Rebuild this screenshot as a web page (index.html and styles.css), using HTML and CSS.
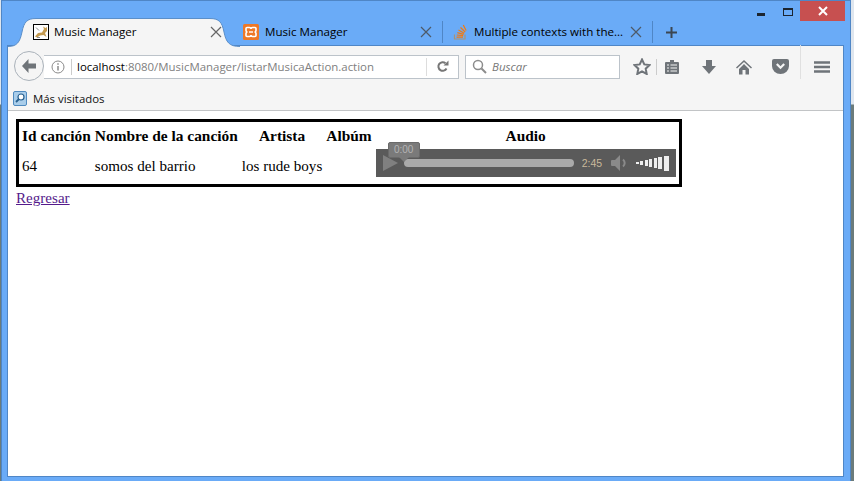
FILE: index.html
```html
<!DOCTYPE html>
<html lang="es">
<head>
<meta charset="utf-8">
<title>Music Manager</title>
<link rel="stylesheet" href="styles.css">
</head>
<body>
<div class="window">
  <div class="caption">
    <span class="cap-min"></span>
    <span class="cap-max"></span>
    <span class="cap-close"><svg width="12" height="10" viewBox="0 0 12 10"><path d="M2 1l8 8M10 1l-8 8" stroke="#fff" stroke-width="2"/></svg></span>
  </div>
  <div class="tabstrip">
    <div class="tab tab-active">
      <svg class="tab-shape" width="232" height="29" viewBox="0 0 232 29"><path d="M0 28.500C9 28.500 12 24 14 14C16 4 19 .5 28 .5H202C211 .5 214 4 216 14C218 24 221 28.500 232 28.500" fill="#f5f5f5" stroke="#5b8fc9"/></svg>
      <svg class="fav" width="16" height="16" viewBox="0 0 16 16"><rect x=".5" y=".5" width="15" height="15" fill="#fff" stroke="#000"/><path d="M2 12.500L5 9l4-.5L11 5l-1-2.500 2.500 1.500L14 3v4l-2 2 1.500 4-3-2-3.500.5-3 2z" fill="#c49a50"/><path d="M3 3.500l3 3M4 13.500h3" stroke="#8a8a8a"/></svg>
      <span class="tab-title">Music Manager</span>
      <svg class="tab-x" width="12" height="12" viewBox="0 0 12 12"><path d="M1 1l10 10M11 1L1 11" stroke="#666" stroke-width="1.200"/></svg>
    </div>
    <div class="tab tab-xampp">
      <svg class="fav" width="16" height="16" viewBox="0 0 16 16"><rect width="16" height="16" rx="1.500" fill="#ee7826"/><path d="M4 3.500h2.500Q8 3.500 8 5q0-1.500 1.500-1.500H12q1 0 1 1v2Q13 8 11.500 8 13 8 13 9.500v2q0 1-1 1H9.500Q8 12.500 8 11q0 1.500-1.500 1.500H4q-1 0-1-1v-2Q3 8 4.500 8 3 8 3 6.500v-2q0-1 1-1z" fill="none" stroke="#fff" stroke-width="1.600"/><path d="M6 8h4" stroke="#fff" stroke-width="1.400"/></svg>
      <span class="tab-title">Music Manager</span>
      <svg class="tab-x" width="12" height="12" viewBox="0 0 12 12"><path d="M1 1l10 10M11 1L1 11" stroke="#4d5a68" stroke-width="1.200"/></svg>
    </div>
    <div class="tab tab-so">
      <svg class="fav" width="16" height="16" viewBox="0 0 16 16"><path d="M1.500 10.500V15h10.500v-4.500" fill="none" stroke="#a89478" stroke-width="1.200"/><path d="M3.500 13.200H10M3.700 11l6.500.6M4.300 8.600l6.300 1.800M5.500 6l5.700 3.200M7.500 3.500L12.200 8M10.300 1l2.800 5.500" stroke="#f27a10" stroke-width="1.250" fill="none"/></svg>
      <span class="tab-title">Multiple contexts with the...</span>
      <svg class="tab-x" width="12" height="12" viewBox="0 0 12 12"><path d="M1 1l10 10M11 1L1 11" stroke="#4d5a68" stroke-width="1.200"/></svg>
    </div>
    <svg class="tab-new" width="13" height="13" viewBox="0 0 13 13"><path d="M6.500 1v11M1 6.500h11" stroke="#3b4652" stroke-width="2"/></svg>
  </div>
  <div class="frame">
    <div class="navbar">
      <div class="back"><svg width="18" height="16" viewBox="0 0 18 16"><path d="M8.500 1L2 8l6.500 7V10.500H16v-5H8.500z" fill="#6f7479"/></svg></div>
      <div class="urlbar">
        <svg class="info" width="14" height="14" viewBox="0 0 14 14"><circle cx="7" cy="7" r="6" fill="none" stroke="#8a8a8a"/><path d="M7 6v4.500M7 3.200v1.600" stroke="#8a8a8a" stroke-width="1.500"/></svg>
        <span class="url"><span class="url-host">localhost</span>:8080/MusicManager/listarMusicaAction.action</span>
        <span class="reload"><svg width="13" height="13" viewBox="0 0 13 13"><path d="M10.500 8.500A4.300 4.300 0 1 1 9.500 3.200" fill="none" stroke="#777" stroke-width="2"/><path d="M7.500 5.500h5v-5z" fill="#777"/></svg></span>
      </div>
      <div class="search">
        <svg width="15" height="15" viewBox="0 0 15 15"><circle cx="6" cy="6" r="4.500" fill="none" stroke="#8c8c8c" stroke-width="1.500"/><path d="M9.500 9.500l4.500 4.500" stroke="#8c8c8c" stroke-width="2"/></svg>
        <span class="search-text">Buscar</span>
      </div>
      <div class="tools">
        <svg class="t-star" width="18" height="17" viewBox="0 0 18 17"><path d="M9 1.500l2.300 4.900 5.200.7-3.800 3.600 1 5.300L9 13.400 4.300 16l1-5.300L1.500 7.100l5.200-.7z" fill="none" stroke="#6f7479" stroke-width="2"/></svg>
        <span class="t-sep"></span>
        <svg class="t-list" width="16" height="16" viewBox="0 0 16 16"><path d="M2 3h4V1h4v2h4a1 1 0 0 1 1 1v10a1 1 0 0 1-1 1H2a1 1 0 0 1-1-1V4a1 1 0 0 1 1-1z" fill="#6f7479"/><path d="M3 6h2M6.500 6H13M3 9h2M6.500 9H13M3 12h2M6.500 12H13" stroke="#f5f5f5"/></svg>
        <svg class="t-down" width="16" height="16" viewBox="0 0 16 16"><path d="M5 1h6v6h4l-7 8-7-8h4z" fill="#6f7479"/></svg>
        <svg class="t-home" width="16" height="16" viewBox="0 0 16 16"><path d="M8 1L0 8.500l1 1L8 3l7 6.500 1-1z" fill="#6f7479"/><path d="M3 10l5-5 5 5v5.500H9.500V11h-3v4.500H3z" fill="#6f7479"/></svg>
        <svg class="t-pocket" width="17" height="15" viewBox="0 0 17 15"><path d="M2 0h13a2 2 0 0 1 2 2v5a8.500 8 0 0 1-17 0V2a2 2 0 0 1 2-2z" fill="#6f7479"/><path d="M4.800 5L8.500 8.700 12.200 5" fill="none" stroke="#f5f5f5" stroke-width="2.200"/></svg>
        <span class="t-sep2"></span>
        <svg class="t-menu" width="16" height="12" viewBox="0 0 16 12"><path d="M0 1.500h16M0 6h16M0 10.500h16" stroke="#6f7479" stroke-width="2.600"/></svg>
      </div>
    </div>
    <div class="bookmarks">
      <svg width="14" height="15" viewBox="0 0 14 15"><rect x=".5" y=".5" width="13" height="14" rx="1.500" fill="#a9cdea" stroke="#4f8abf"/><circle cx="8" cy="6" r="3" fill="#fff" stroke="#27608f" stroke-width="1.200"/><path d="M6 8l-3 3" stroke="#27608f" stroke-width="1.800"/></svg>
      <span class="bm-text">Más visitados</span>
    </div>
    <div class="content">
      <table class="songs">
        <tr>
          <th>Id canción</th>
          <th>Nombre de la canción</th>
          <th>Artista</th>
          <th>Albúm</th>
          <th>Audio</th>
        </tr>
        <tr>
          <td class="cell-text">64</td>
          <td class="cell-text">somos del barrio</td>
          <td class="cell-text">los rude boys</td>
          <td class="cell-text"></td>
          <td class="cell-audio">
            <div class="player">
              <div class="bubble">0:00</div>
              <svg class="play" width="15" height="16" viewBox="0 0 15 16"><path d="M0 0l15 8L0 16z" fill="#808080"/></svg>
              <div class="track"></div>
              <span class="time">2:45</span>
              <svg class="speaker" width="18" height="16" viewBox="0 0 18 16"><path d="M0 6q0-1 1-1h3l5-5v16l-5-5H1q-1 0-1-1z" fill="#8a8a8a"/><path d="M12 4.500a4.500 4.500 0 0 1 0 7" fill="none" stroke="#8a8a8a" stroke-width="2"/></svg>
              <div class="volume"><i class="v1"></i><i class="v2"></i><i class="v3"></i><i class="v4"></i><i class="v5"></i><i class="v6"></i><i class="v7"></i></div>
            </div>
          </td>
        </tr>
      </table>
      <a class="back-link" href="#">Regresar</a>
    </div>
  </div>
</div>
</body>
</html>
```

FILE: styles.css
```css
* { box-sizing: border-box; }
html, body { margin: 0; height: 100%; overflow: hidden; }
body {
  background: linear-gradient(to bottom, #dfe6ee 0, #dfe6ee 104px, #6b7b7b 105px, #6b7b7b 100%);
  font-family: "Open Sans", "Liberation Sans", sans-serif;
}
.window {
  width: 850px;
  height: 481px;
  margin-left: 1px;
  padding: 0 5px;
  background: #6aabf7;
  border-top: 1px solid #4f86c6;
  border-left: 1px solid #4f86c6;
  border-right: 1px solid #4f86c6;
  display: flex;
  flex-direction: column;
}
.caption {
  height: 17px;
  display: flex;
  justify-content: flex-end;
  align-items: flex-start;
  flex: none;
}
.cap-min { width: 8px; height: 3px; background: #1c2530; margin: 12px 18px 0 0; }
.cap-max { width: 10px; height: 8px; border: 1px solid #1c2530; border-top-width: 2px; margin: 7px 7px 0 0; }
.cap-close {
  width: 45px;
  height: 20px;
  background: #c75050;
  display: flex;
  align-items: center;
  justify-content: center;
  position: relative;
  z-index: 2;
}
.tabstrip {
  height: 27px;
  display: flex;
  align-items: flex-start;
  flex: none;
  padding-left: 7px;
  position: relative;
  z-index: 1;
  font-size: 11.600px;
  line-height: 16px;
  color: #000;
}
.tab {
  height: 28px;
  display: flex;
  align-items: center;
  position: relative;
}
.tab-title { white-space: nowrap; }
.tab-x { flex: none; }
.fav { flex: none; }
.tab-active { width: 222px; padding-left: 19px; }
.tab-shape { position: absolute; left: -6px; top: 0; }
.tab-active .fav, .tab-active .tab-title, .tab-active .tab-x { position: relative; }
.tab-active .tab-title { margin-left: 5px; }
.tab-active .tab-x { margin-left: 73px; }
.tab-xampp { width: 207px; padding-left: 7px; border-right: 1px solid #4f86c6; height: 22px; margin-top: 3px; }
.tab-xampp .tab-title { margin-left: 6px; }
.tab-xampp .tab-x { margin-left: 72px; }
.tab-so { width: 210px; padding-left: 10px; border-right: 1px solid #4f86c6; height: 22px; margin-top: 3px; }
.tab-so .tab-title { margin-left: 5px; }
.tab-so .tab-x { margin-left: 7px; }
.tab-new { margin: 8px 0 0 12px; }
.frame {
  width: 837px;
  height: 432px;
  border: 1px solid #4f86c6;
  background: #fff;
  display: flex;
  flex-direction: column;
  flex: none;
}
.navbar {
  height: 35px;
  flex: none;
  background: #f5f5f5;
  display: flex;
  align-items: center;
  position: relative;
  padding-left: 36px;
}
.back {
  position: absolute;
  left: 6px;
  top: 5px;
  width: 30px;
  height: 30px;
  border-radius: 50%;
  border: 1px solid #aab2ba;
  background: #f5f5f5;
  display: flex;
  align-items: center;
  justify-content: center;
  z-index: 1;
}
.urlbar {
  width: 415px;
  height: 24px;
  margin-top: 6px;
  background: #fff;
  border: 1px solid #bcc3ca;
  border-left: 0;
  display: flex;
  align-items: center;
  padding-left: 7px;
  flex: none;
  font-size: 11.450px;
}
.info { flex: none; }
.url {
  margin-left: 6px;
  padding-left: 5px;
  border-left: 1px solid #ccc;
  line-height: 16px;
  color: #808080;
  white-space: nowrap;
  flex: 1;
}
.url-host { color: #000; }
.reload {
  width: 32px;
  height: 18px;
  border-left: 1px solid #ddd;
  display: flex;
  align-items: center;
  justify-content: center;
  flex: none;
}
.search {
  width: 155px;
  height: 24px;
  margin: 6px 0 0 6px;
  background: #fff;
  border: 1px solid #bcc3ca;
  display: flex;
  align-items: center;
  padding-left: 6px;
  flex: none;
}
.search-text { margin-left: 5px; font-size: 11.500px; font-style: italic; color: #777; }
.tools {
  display: flex;
  align-items: center;
  margin-top: 6px;
  flex: none;
  height: 24px;
}
.t-star { margin-left: 13px; }
.t-sep { width: 1px; height: 16px; background: #ccc; margin-left: 5px; }
.t-list { margin-left: 7px; }
.t-down { margin-left: 21px; }
.t-home { margin-left: 19px; }
.t-pocket { margin-left: 20px; }
.t-sep2 { width: 1px; height: 34px; background: #e0e0e0; margin: -10px 0 0 11px; }
.t-menu { margin-left: 13px; }
.bookmarks {
  height: 30px;
  flex: none;
  background: #f5f5f5;
  border-bottom: 1px solid #c2c4c6;
  display: flex;
  align-items: center;
  padding: 6px 0 0 5px;
  font-size: 11.400px;
  color: #111;
}
.bm-text { margin-left: 6px; }
.content {
  flex: 1;
  padding: 8px;
  font-family: "Liberation Serif", "Times New Roman", serif;
  font-size: 15.100px;
  color: #000;
}
.songs {
  border: 3px solid #000;
  border-collapse: separate;
  border-spacing: 2px;
}
.songs th { padding: 3px 1px 0; font-size: 15.400px; line-height: 18px; }
.cell-text { padding: 4px 1px 1px; }
.cell-audio { padding: 1px; }
.player {
  width: 300px;
  height: 28px;
  margin: 1px 0 4px;
  background: #5a5a5a;
  position: relative;
  display: flex;
  align-items: center;
  padding-left: 7px;
}
.bubble {
  position: absolute;
  left: 12px;
  top: -7px;
  width: 32px;
  height: 16px;
  border-radius: 2px;
  background: #7a7a7a;
  border: 1px solid #6a6a6a;
  color: #b4b4b4;
  font: 10px/13px "Liberation Sans", Arial, sans-serif;
  text-align: center;
  z-index: 2;
}
.bubble::after {
  content: "";
  position: absolute;
  left: 10px;
  top: 14px;
  border: 5px solid transparent;
  border-top-color: #7a7a7a;
  border-bottom-width: 0;
}
.play { flex: none; }
.track {
  width: 170px;
  height: 8px;
  margin-left: 6px;
  border-radius: 4px;
  background: #aaa;
  flex: none;
}
.time {
  margin-left: 8px;
  width: 29px;
  flex: none;
  font: 10.500px "Liberation Sans", Arial, sans-serif;
  color: #c9b99c;
}
.speaker { flex: none; }
.volume {
  display: flex;
  align-items: center;
  gap: 1.500px;
  margin-left: 7px;
}
.volume i { display: block; background: #eee; width: 3px; }
.v1 { height: 2px; }
.v2 { height: 4px; }
.v3 { height: 6px; }
.v4 { height: 8px; }
.v5 { height: 10px; }
.volume .v6 { height: 12px; width: 4px; }
.volume .v7 { height: 15px; width: 5px; }
.back-link { color: #551a8b; display: inline-block; margin-top: 3px; }
```
